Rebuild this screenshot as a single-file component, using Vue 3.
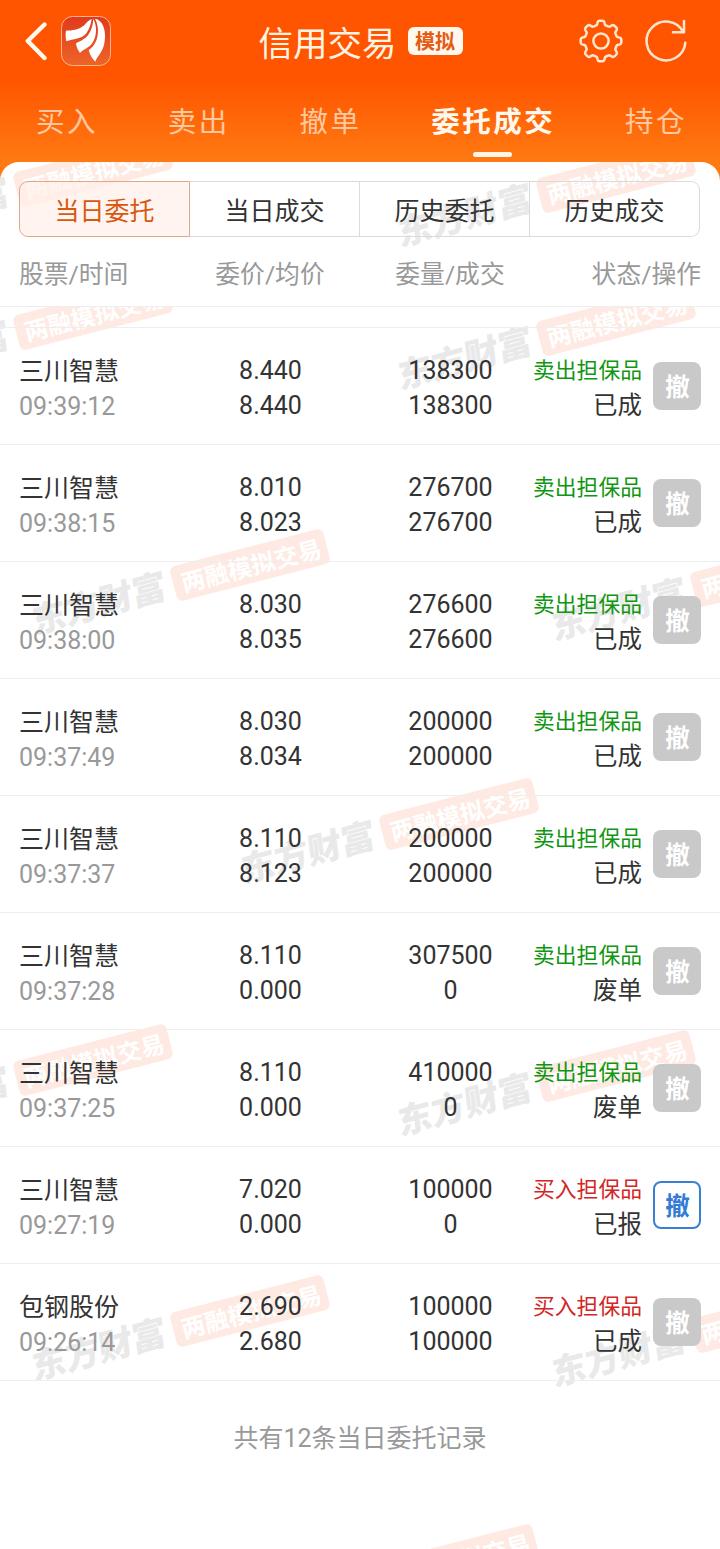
<template>
  <div class="page">
    <header class="top">
      <div class="nav">
        <div class="nav__left">
          <svg class="nav__back" width="22" height="40" viewBox="0 0 22 40">
            <path d="M19.5 3.5 L2.8 20 L19.5 37" />
          </svg>
          <svg class="nav__logo" width="50" height="50" viewBox="0 0 150 150">
            <defs>
              <linearGradient id="logoBg" x1="0" y1="0" x2="0" y2="1">
                <stop offset="0" stop-color="#e03a1c" />
                <stop offset="1" stop-color="#ee6428" />
              </linearGradient>
            </defs>
            <rect x="1.5" y="1.5" width="147" height="147" rx="33" fill="url(#logoBg)" stroke="#ffb48c" stroke-width="3" />
            <path fill="#fff" d="M92 9 C82 12 76 22 68 29 C53 41 34 43 15 44 C13 54 14 66 16 76 C36 68 62 70 76 52 C86 39 90 22 92 9Z" />
            <path fill="#fff" d="M97 9 C95 34 87 58 67 70 C60 75 52 78 45 82 C46 93 51 103 57 111 C66 99 84 98 96 78 C108 58 108 28 97 9Z" />
            <path fill="#fff" d="M102 8 C117 36 112 70 97 89 C92 95 88 99 83 102 C86 116 94 128 103 137 C107 122 122 113 129 87 C136 58 131 29 117 16 C112 11 107 9 102 8Z" />
          </svg>
        </div>
        <div class="nav__title">
          <span>信用交易</span>
          <em class="nav__badge">模拟</em>
        </div>
        <div class="nav__right">
          <svg width="44" height="44" viewBox="-22 -22 44 44" class="nav__icon">
            <path :d="gearPath" />
            <circle r="7.6" />
          </svg>
          <svg width="44" height="44" viewBox="-22 -22 44 44" class="nav__icon">
            <path d="M19.3 1.8 A19.4 19.4 0 1 1 17.2 -9" />
            <path d="M18 -20 V-8.8 H7" />
          </svg>
        </div>
      </div>
      <nav class="tabs">
        <span
          v-for="t in tabs"
          :key="t"
          class="tabs__item"
          :class="{ 'tabs__item--active': t === activeTab }"
          @click="activeTab = t"
        >{{ t }}</span>
      </nav>
    </header>

    <section class="filter">
      <svg class="mark" width="720" height="144">
        <g v-for="(m, i) in headMarks" :key="i" :transform="`translate(${m[0]} ${m[1]})`">
          <g transform="rotate(-14.4)">
            <rect class="mark__pill" x="-79" y="-18" width="158" height="36" rx="6" />
            <text class="mark__tag" x="1" y="10">两融模拟交易</text>
          </g>
          <text class="mark__brand" transform="translate(-151 39) rotate(-15.5) skewX(-8)" y="12">东方财富</text>
        </g>
      </svg>
      <div class="seg">
        <button
          v-for="s in segments"
          :key="s"
          class="seg__btn"
          :class="{ 'seg__btn--active': s === activeSeg }"
          @click="activeSeg = s"
        >{{ s }}</button>
      </div>
      <div class="cols">
        <span>股票/时间</span>
        <span>委价/均价</span>
        <span>委量/成交</span>
        <span>状态/操作</span>
      </div>
    </section>

    <main class="list">
      <svg class="mark" width="720" height="1242">
        <g v-for="(m, i) in listMarks" :key="i" :transform="`translate(${m[0]} ${m[1]})`">
          <g transform="rotate(-14.4)">
            <rect class="mark__pill" x="-79" y="-18" width="158" height="36" rx="6" />
            <text class="mark__tag" x="1" y="10">两融模拟交易</text>
          </g>
          <text class="mark__brand" transform="translate(-151 39) rotate(-15.5) skewX(-8)" y="12">东方财富</text>
        </g>
      </svg>
      <div class="list__stub"></div>
      <div v-for="o in orders" :key="o.time" class="row">
        <div class="row__name">
          <p>{{ o.name }}</p>
          <p class="row__time">{{ o.time }}</p>
        </div>
        <div class="row__num">
          <p>{{ o.price }}</p>
          <p>{{ o.avg }}</p>
        </div>
        <div class="row__num">
          <p>{{ o.qty }}</p>
          <p>{{ o.done }}</p>
        </div>
        <div class="row__op">
          <div class="row__state">
            <p class="row__side" :class="o.buy ? 'row__side--buy' : 'row__side--sell'">
              {{ o.buy ? '买入担保品' : '卖出担保品' }}
            </p>
            <p class="row__status">{{ o.status }}</p>
          </div>
          <button class="cancel" :class="{ 'cancel--on': o.status === '已报' }">撤</button>
        </div>
      </div>
      <p class="list__total">共有12条当日委托记录</p>
    </main>
  </div>
</template>

<script setup>
import { ref } from 'vue'

const tabs = ['买入', '卖出', '撤单', '委托成交', '持仓']
const activeTab = ref('委托成交')

const segments = ['当日委托', '当日成交', '历史委托', '历史成交']
const activeSeg = ref('当日委托')

const order = (name, time, price, avg, qty, done, status, buy = false) => ({
  name, time, price, avg, qty, done, status, buy,
})

const orders = [
  order('三川智慧', '09:39:12', '8.440', '8.440', '138300', '138300', '已成'),
  order('三川智慧', '09:38:15', '8.010', '8.023', '276700', '276700', '已成'),
  order('三川智慧', '09:38:00', '8.030', '8.035', '276600', '276600', '已成'),
  order('三川智慧', '09:37:49', '8.030', '8.034', '200000', '200000', '已成'),
  order('三川智慧', '09:37:37', '8.110', '8.123', '200000', '200000', '已成'),
  order('三川智慧', '09:37:28', '8.110', '0.000', '307500', '0', '废单'),
  order('三川智慧', '09:37:25', '8.110', '0.000', '410000', '0', '废单'),
  order('三川智慧', '09:27:19', '7.020', '0.000', '100000', '0', '已报', true),
  order('包钢股份', '09:26:14', '2.690', '2.680', '100000', '100000', '已成', true),
]

// watermark anchors: centre of the orange tag
const headMarks = [[93, 9], [616, 15]]
const listMarks = [
  [93, 7], [616, 13],
  [250, 258], [770, 264],
  [459, 507],
  [93, 753], [616, 759],
  [250, 1004], [770, 1010],
  [459, 1253],
]

// eight-toothed gear outline
const gearPath = (() => {
  const pts = []
  for (let i = 0; i < 240; i++) {
    const a = (i / 240) * Math.PI * 2
    const r = 18.3 + 2.1 * Math.tanh(2.4 * Math.cos(8 * a))
    pts.push(`${(r * Math.cos(a)).toFixed(2)} ${(r * Math.sin(a)).toFixed(2)}`)
  }
  return `M${pts.join('L')}Z`
})()
</script>

<style>
body { margin: 0; background: #fff; }
</style>

<style scoped>
.page {
  display: flex; flex-direction: column; width: 720px; height: 1549px; overflow: hidden;
  font-family: Roboto, "Noto Sans CJK SC", sans-serif; font-size: 25px; color: #333;
  background: #fff;
}
p { margin: 0; }
button { font-family: inherit; padding: 0; cursor: pointer; }

.top {
  flex: none; height: 182px; margin-bottom: -20px;
  background: linear-gradient(#ff5500 0, #ff5500 80px, #ff7a12 162px);
}
.nav { display: grid; grid-template-columns: 1fr auto 1fr; align-items: center; height: 82px; padding: 0 32px 0 25px; }
.nav__left { display: flex; align-items: center; gap: 14px; }
.nav__back path { fill: none; stroke: #fff8ef; stroke-width: 4.4; stroke-linecap: round; stroke-linejoin: round; }
.nav__title {
  display: flex; align-items: center; gap: 11px; padding-left: 8px;
  font-size: 34.5px; line-height: 44px; color: #fff4e4;
}
.nav__title span { padding-top: 5px; }
.nav__badge {
  width: 55px; height: 28px; border-radius: 6px; background: #fff8ee; color: #e55b14;
  font-size: 20px; line-height: 31px; font-style: normal; font-weight: 700; text-align: center;
}
.nav__right { display: flex; justify-content: flex-end; gap: 21px; }
.nav__icon { fill: none; stroke: #ffe6cd; stroke-width: 2.5; stroke-linejoin: round; stroke-linecap: round; }

.tabs { display: flex; justify-content: space-between; height: 80px; padding: 0 33px 0 36px; }
.tabs__item {
  position: relative; font-size: 28.5px; letter-spacing: 2.5px; line-height: 81px;
  color: #ffc9a0;
}
.tabs__item--active { font-weight: 700; color: #fff8ee; }
.tabs__item--active::after {
  content: ""; position: absolute; left: 42px; top: 70px; width: 39px; height: 5px;
  border-radius: 3px; background: #fff5e6;
}

.filter {
  position: relative; flex: none; box-sizing: border-box; height: 145px; overflow: hidden;
  padding-top: 19px; border-bottom: 1px solid #eee; border-radius: 19px 19px 0 0; background: #fff;
}
.mark { position: absolute; left: 0; top: 0; pointer-events: none; }
.mark__pill { fill: #feeae2; }
.mark__tag { fill: #fff; font-size: 24px; font-weight: 700; text-anchor: middle; }
.mark__brand { fill: #e9e9e9; font-size: 34.5px; font-weight: 900; text-anchor: middle; }

.seg {
  position: relative; display: grid; grid-template-columns: 171px 170px 170px 170px;
  height: 56px; margin: 0 19px;
}
.seg__btn {
  box-sizing: border-box; border: 1px solid #d9dbdd; border-left: none; background: transparent;
  padding-top: 5px; color: #333; font-size: 25px; line-height: 49px;
}
.seg__btn:last-child { border-radius: 0 9px 9px 0; }
.seg__btn:first-child { border-left: 1px solid #d9dbdd; border-radius: 9px 0 0 9px; }
.seg__btn--active, .seg__btn--active:first-child { border-color: #e0a888; color: #d9580f; background: rgba(255, 240, 234, 0.75); }

.cols {
  position: relative; display: grid; grid-template-columns: repeat(4, 1fr); height: 69px;
  font-size: 24.8px; line-height: 75px; color: #999; text-align: center;
}
.cols span:first-child { text-align: left; padding-left: 19px; }
.cols span:last-child { text-align: right; padding-right: 19px; }

.list { position: relative; flex: 1; min-height: 0; overflow: hidden; }
.list__stub { position: relative; height: 20px; border-bottom: 1px solid #eee; }
.row {
  position: relative; display: grid; grid-template-columns: repeat(4, 180px);
  height: 116px; align-items: center; border-bottom: 1px solid #eee; line-height: 35px;
}
.row__name { padding: 5px 0 0 19px; }
.row__time { color: #999; }
.row__num { padding: 4px 0 0 1px; text-align: center; }
.row__op { display: flex; align-items: center; justify-content: flex-end; gap: 11px; padding-right: 19px; }
.row__state { flex: none; padding-top: 4px; text-align: right; }
.row__side { font-size: 21.8px; white-space: nowrap; }
.row__side--sell { color: #119611; }
.row__side--buy { color: #d32626; }
.row__status { font-size: 24.5px; }
.cancel {
  flex: none; box-sizing: border-box; width: 48px; height: 48px; border: none; border-radius: 8px;
  padding: 4px 0 0 1px; background: #c9c9c9; color: #fff; font-size: 24.5px; font-weight: 700; line-height: 44px;
}
.cancel--on { border: 2px solid #3a80d2; background: #fff; color: #327bd6; line-height: 40px; }
.list__total { position: relative; padding-top: 40px; line-height: 36px; color: #999; text-align: center; }
</style>
